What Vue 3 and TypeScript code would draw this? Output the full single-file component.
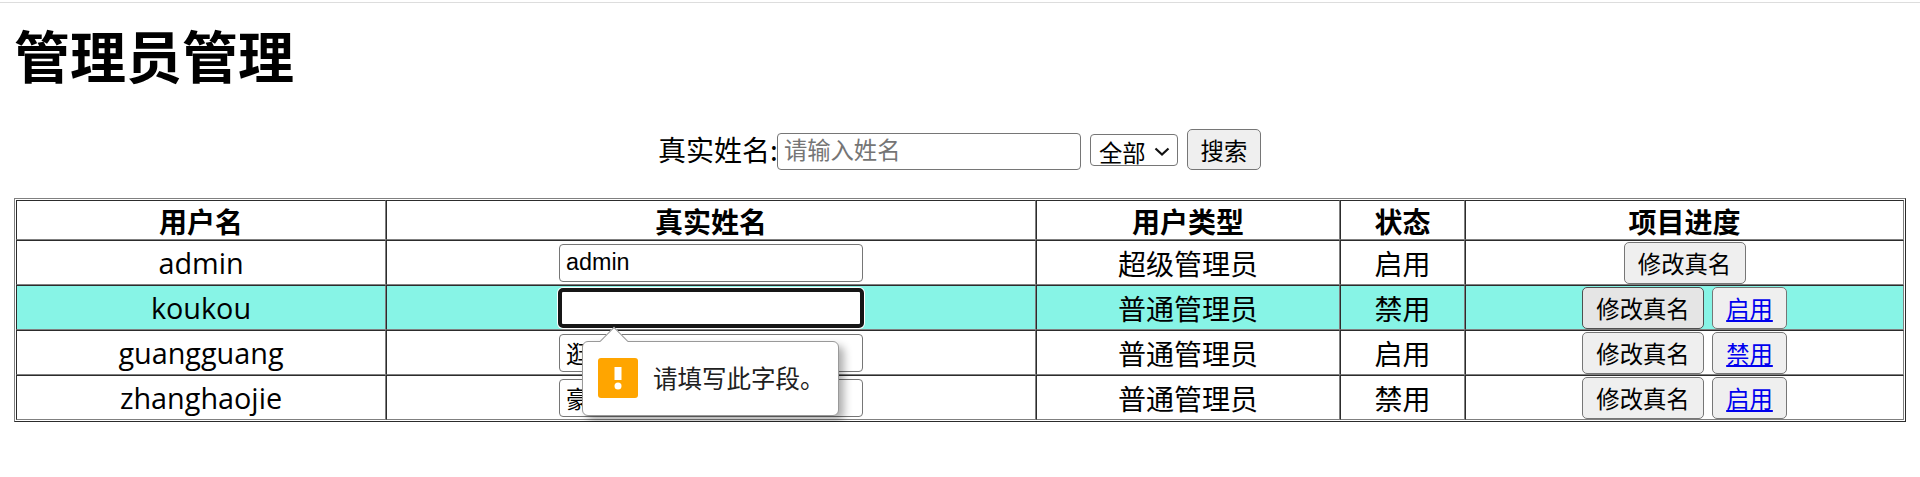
<template>
  <div class="page">
    <div class="top-line"></div>
    <h1>管理员管理</h1>

    <form class="search-bar" @submit.prevent>
      <label for="searchName">真实姓名:</label>
      <input id="searchName" class="field search-field" placeholder="请输入姓名" />
      <span class="select-wrap">
        <select class="status-select">
          <option>全部</option>
        </select>
        <svg class="select-arrow" width="16" height="9" viewBox="0 0 16 9">
          <path d="M1.5 1.5 L8 7.5 L14.5 1.5" fill="none" stroke="#111" stroke-width="2.2" />
        </svg>
      </span>
      <button type="submit" class="btn search-btn">搜索</button>
    </form>

    <table class="admin-table">
      <colgroup>
        <col class="col-user" />
        <col class="col-name" />
        <col class="col-type" />
        <col class="col-status" />
        <col class="col-action" />
      </colgroup>
      <thead>
        <tr>
          <th>用户名</th>
          <th>真实姓名</th>
          <th>用户类型</th>
          <th>状态</th>
          <th>项目进度</th>
        </tr>
      </thead>
      <tbody>
        <tr v-for="admin in admins" :key="admin.username" :class="{ active: admin.focused }">
          <td class="latin">{{ admin.username }}</td>
          <td>
            <div class="name-wrap">
              <input class="field name-field" :class="{ focused: admin.focused }" :value="admin.realName" />
              <div v-if="admin.focused" class="bubble">
                <span class="bubble-arrow"></span>
                <span class="bubble-icon">
                  <svg width="40" height="40" viewBox="0 0 40 40">
                    <rect width="40" height="40" rx="3" fill="#ffa500" />
                    <rect x="16.5" y="9" width="7" height="13" fill="#fff" />
                    <circle cx="20" cy="28" r="3.5" fill="#fff" />
                  </svg>
                </span>
                <span class="bubble-text">请填写此字段。</span>
              </div>
            </div>
          </td>
          <td>{{ admin.type }}</td>
          <td>{{ admin.enabled ? '启用' : '禁用' }}</td>
          <td>
            <div class="actions">
              <button class="btn edit-btn" :class="{ hover: admin.focused }">修改真名</button>
              <button v-if="admin.type !== '超级管理员'" class="btn toggle-btn">
                <a href="#" @click.prevent>{{ admin.enabled ? '禁用' : '启用' }}</a>
              </button>
            </div>
          </td>
        </tr>
      </tbody>
    </table>
  </div>
</template>

<script setup lang="ts">
interface Admin {
  username: string
  realName: string
  type: string
  enabled: boolean
  focused?: boolean
}

const admins: Admin[] = [
  { username: 'admin', realName: 'admin', type: '超级管理员', enabled: true },
  { username: 'koukou', realName: '', type: '普通管理员', enabled: false, focused: true },
  { username: 'guangguang', realName: '逛逛', type: '普通管理员', enabled: true },
  { username: 'zhanghaojie', realName: '豪杰', type: '普通管理员', enabled: false },
]
</script>

<style>
body {
  margin: 0;
  background: #ffffff;
}
</style>

<style scoped>
.page {
  padding-top: 2px;
  color: #000000;
  font-family: "Noto Sans CJK SC", "Open Sans", sans-serif;
  font-size: 28px;
}

.top-line {
  height: 1px;
  background: #dddddd;
}

h1 {
  margin: 13px 14px 0;
  font-size: 56px;
  line-height: 76px;
  font-weight: 700;
}

.search-bar {
  display: flex;
  justify-content: center;
  align-items: center;
  margin-top: 37px;
  height: 41px;
  padding-right: 1px;
}

.search-bar label {
  line-height: 41px;
}

.field {
  box-sizing: border-box;
  width: 304px;
  height: 38px;
  padding: 0 6px;
  border: 1px solid #767676;
  border-radius: 4px;
  background: #ffffff;
  color: #000000;
  font-family: "Liberation Sans", "Noto Sans CJK SC", sans-serif;
  font-size: 23.33px;
}

.field::placeholder {
  color: #757575;
}

.search-field {
  height: 37px;
  margin: 4px 0 0 -1px;
}

.select-wrap {
  position: relative;
  display: flex;
  margin: 1px 0 0 9px;
}

.status-select {
  box-sizing: border-box;
  width: 88px;
  height: 32px;
  padding: 0 0 0 8px;
  border: 1px solid #767676;
  border-radius: 4px;
  background: #ffffff;
  color: #000000;
  font-family: "Noto Sans CJK SC", sans-serif;
  font-size: 23.33px;
  appearance: none;
}

.select-arrow {
  position: absolute;
  top: 13px;
  right: 8px;
  pointer-events: none;
}

.btn {
  box-sizing: border-box;
  height: 42px;
  padding: 0;
  border: 1px solid #767676;
  border-radius: 5px;
  background: #efefef;
  color: #000000;
  font-family: "Noto Sans CJK SC", sans-serif;
  font-size: 23.33px;
}

.btn.hover {
  background: #e5e5e5;
  border-color: #4f4f4f;
}

.search-btn {
  width: 74px;
  height: 41px;
  margin-left: 9px;
}

.admin-table {
  box-sizing: border-box;
  width: 1892px;
  margin: 28px 14px 0;
  padding: 1px;
  border: 1px outset #808080;
  border-spacing: 0;
  table-layout: fixed;
}

.col-user {
  width: 370px;
}

.col-name {
  width: 650px;
}

.col-type {
  width: 304px;
}

.col-status {
  width: 125px;
}

.admin-table th,
.admin-table td {
  box-sizing: border-box;
  padding: 0;
  border: 1px inset #808080;
  text-align: center;
  vertical-align: middle;
}

.admin-table th {
  height: 40px;
  padding-top: 3px;
  line-height: 35px;
  font-weight: 700;
}

.admin-table td {
  height: 45px;
  line-height: 40px;
}

.admin-table td.latin {
  font-family: "Open Sans", "Noto Sans CJK SC", sans-serif;
  font-size: 28.8px;
}

tr.active td {
  background: #87f4e6;
}

.name-wrap {
  position: relative;
  width: 304px;
  height: 38px;
  margin: 0 auto;
}

.name-field {
  display: block;
}

.name-field.focused {
  outline: 4px solid #161616;
  outline-offset: -3px;
  box-shadow: 0 0 0 2px #ffffff;
}

.bubble {
  position: absolute;
  top: 52px;
  left: 23px;
  z-index: 10;
  box-sizing: border-box;
  display: flex;
  align-items: center;
  gap: 15px;
  width: 257px;
  height: 75px;
  padding-left: 15px;
  border: 1px solid #999999;
  border-radius: 6px;
  background: #ffffff;
  box-shadow: 5px 5px 9px rgba(0, 0, 0, 0.32);
}

.bubble-arrow {
  position: absolute;
  top: -11px;
  left: 21px;
  width: 20px;
  height: 20px;
  box-sizing: border-box;
  border-top: 1px solid #999999;
  border-left: 1px solid #999999;
  background: #ffffff;
  transform: rotate(45deg);
}

.bubble-icon {
  display: flex;
  width: 40px;
  height: 40px;
}

.bubble-text {
  font-size: 24.5px;
  line-height: 30px;
  color: #202020;
  white-space: nowrap;
}

.actions {
  display: flex;
  justify-content: center;
  gap: 8px;
}

.edit-btn {
  width: 122px;
}

.toggle-btn {
  width: 75px;
}

.toggle-btn a {
  color: #0000ee;
  text-decoration: underline;
}
</style>
